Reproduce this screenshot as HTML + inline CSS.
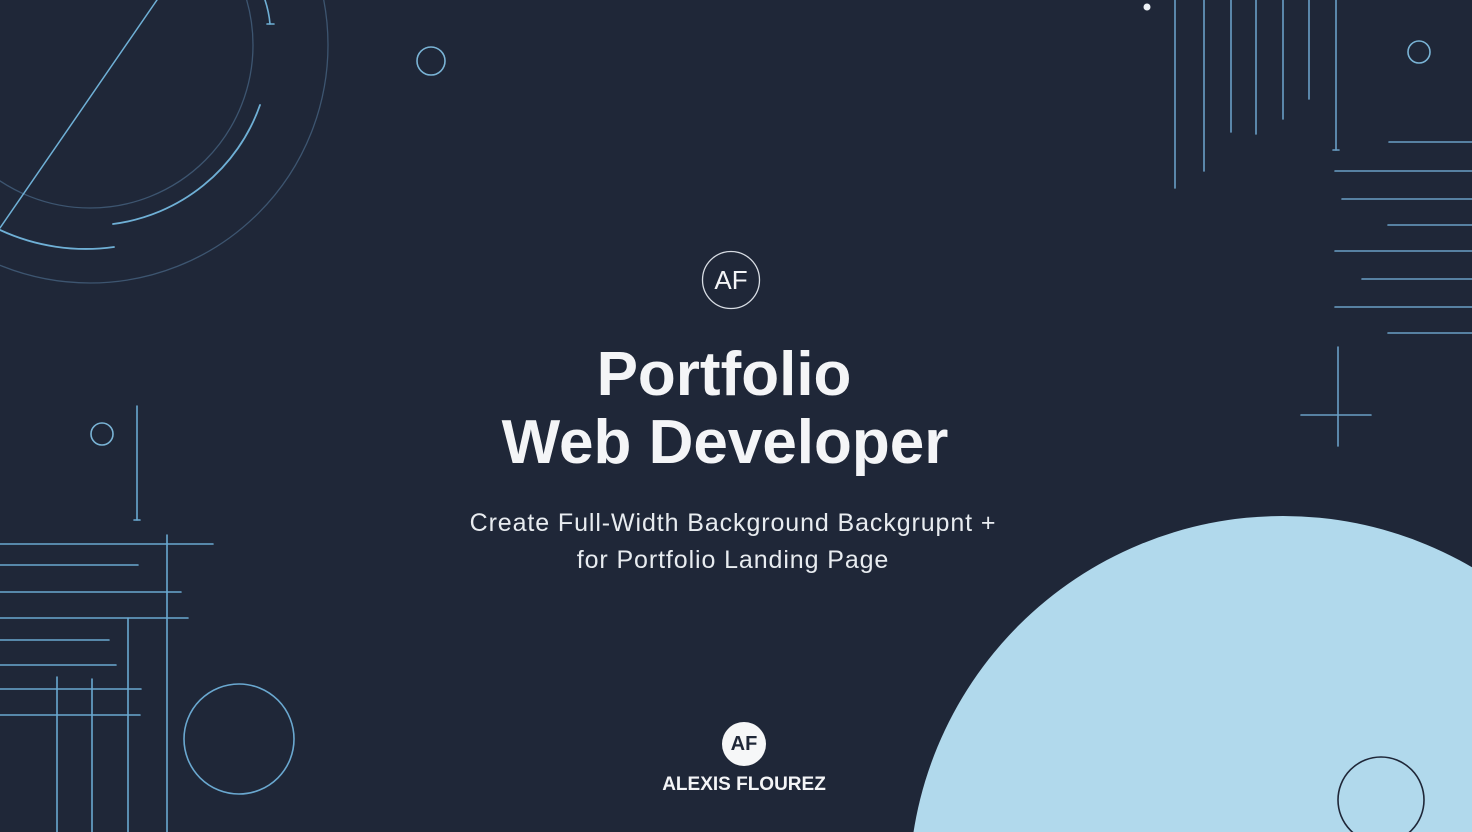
<!DOCTYPE html>
<html><head><meta charset="utf-8"><style>
html,body{margin:0;padding:0;width:1472px;height:832px;overflow:hidden;}
body{background:#1f2738;position:relative;font-family:"Liberation Sans",sans-serif;}
svg{position:absolute;left:0;top:0;}
.t{position:absolute;left:0;width:1472px;text-align:center;color:#f4f5f7;}
.c{position:absolute;text-align:center;color:#f4f5f7;}
</style></head><body>
<svg width="1472" height="832" viewBox="0 0 1472 832">
<g fill="none" stroke-linecap="round">
 <circle cx="90" cy="45" r="163" stroke="#3d5570" stroke-width="1.3"/>
 <circle cx="90" cy="45" r="238" stroke="#3d5570" stroke-width="1.3"/>
 <path d="M260 105 A180 180 0 0 1 113 224" stroke="#6fb0d6" stroke-width="1.8"/>
 <path d="M0 230 A204 204 0 0 0 114 247" stroke="#6fb0d6" stroke-width="1.8"/>
 <path d="M265 0 Q269 12 270 24" stroke="#6fb0d6" stroke-width="1.6"/>
 <line x1="267" y1="24" x2="274" y2="24" stroke="#6fb0d6" stroke-width="1.6"/>
 <line x1="157" y1="0" x2="0" y2="228" stroke="#6fb0d6" stroke-width="1.5"/>
 <circle cx="431" cy="61" r="14" stroke="#7ab4d6" stroke-width="1.6"/>
 <g stroke="#6a9fc6" stroke-width="1.6">
  <line x1="1175" y1="0" x2="1175" y2="188"/>
  <line x1="1204" y1="0" x2="1204" y2="171"/>
  <line x1="1231" y1="0" x2="1231" y2="132"/>
  <line x1="1256" y1="0" x2="1256" y2="134"/>
  <line x1="1283" y1="0" x2="1283" y2="119"/>
  <line x1="1309" y1="0" x2="1309" y2="99"/>
  <line x1="1336" y1="0" x2="1336" y2="150"/>
  <line x1="1333" y1="150" x2="1339" y2="150"/>
  <line x1="1389" y1="142" x2="1472" y2="142"/>
  <line x1="1335" y1="171" x2="1472" y2="171"/>
  <line x1="1342" y1="199" x2="1472" y2="199"/>
  <line x1="1388" y1="225" x2="1472" y2="225"/>
  <line x1="1335" y1="251" x2="1472" y2="251"/>
  <line x1="1362" y1="279" x2="1472" y2="279"/>
  <line x1="1335" y1="307" x2="1472" y2="307"/>
  <line x1="1388" y1="333" x2="1472" y2="333"/>
  <line x1="1338" y1="347" x2="1338" y2="446"/>
  <line x1="1301" y1="415" x2="1371" y2="415"/>
 </g>
 <circle cx="1419" cy="52" r="11" stroke="#7ab4d6" stroke-width="1.6"/>
 <g stroke="#6aa8d0" stroke-width="1.6">
  <line x1="137" y1="406" x2="137" y2="520"/>
  <line x1="134" y1="520" x2="140" y2="520"/>
  <line x1="0" y1="544" x2="213" y2="544"/>
  <line x1="0" y1="565" x2="138" y2="565"/>
  <line x1="0" y1="592" x2="181" y2="592"/>
  <line x1="0" y1="618" x2="188" y2="618"/>
  <line x1="0" y1="640" x2="109" y2="640"/>
  <line x1="0" y1="665" x2="116" y2="665"/>
  <line x1="0" y1="689" x2="141" y2="689"/>
  <line x1="0" y1="715" x2="140" y2="715"/>
  <line x1="167" y1="535" x2="167" y2="832"/>
  <line x1="128" y1="618" x2="128" y2="832"/>
  <line x1="57" y1="677" x2="57" y2="832"/>
  <line x1="92" y1="679" x2="92" y2="832"/>
 </g>
 <circle cx="102" cy="434" r="11" stroke="#7ab4d6" stroke-width="1.6"/>
 <circle cx="239" cy="739" r="55" stroke="#6aa8d0" stroke-width="1.6"/>
 <circle cx="731" cy="280" r="28.5" stroke="#d8dde4" stroke-width="1.3"/>
</g>
<circle cx="1147" cy="7" r="3.5" fill="#eef2f6"/>
<circle cx="1283" cy="890" r="374" fill="#b1d9ec"/>
<circle cx="1381" cy="800" r="43" fill="none" stroke="#1f2738" stroke-width="1.6"/>
<circle cx="744" cy="744" r="22" fill="#f6f7f8"/>
</svg>
<div class="c" style="top:265px;left:691px;width:80px;font-size:26px;line-height:30px;">AF</div>
<div class="t" style="top:340px;font-size:62px;font-weight:bold;line-height:70px;left:-12px;">Portfolio</div>
<div class="t" style="top:408px;font-size:62px;font-weight:bold;line-height:70px;left:-11px;">Web Developer</div>
<div class="t" style="top:505px;font-size:25px;line-height:37px;letter-spacing:0.9px;left:-3px;color:#e8ecf0;">Create Full-Width Background Backgrupnt +<br>for Portfolio Landing Page</div>
<div class="c" style="top:732px;left:704px;width:80px;font-size:20px;font-weight:bold;line-height:24px;color:#1f2738;">AF</div>
<div class="c" style="top:773px;left:644px;width:200px;font-size:19px;font-weight:bold;line-height:24px;white-space:nowrap;">ALEXIS FLOUREZ</div>
</body></html>
